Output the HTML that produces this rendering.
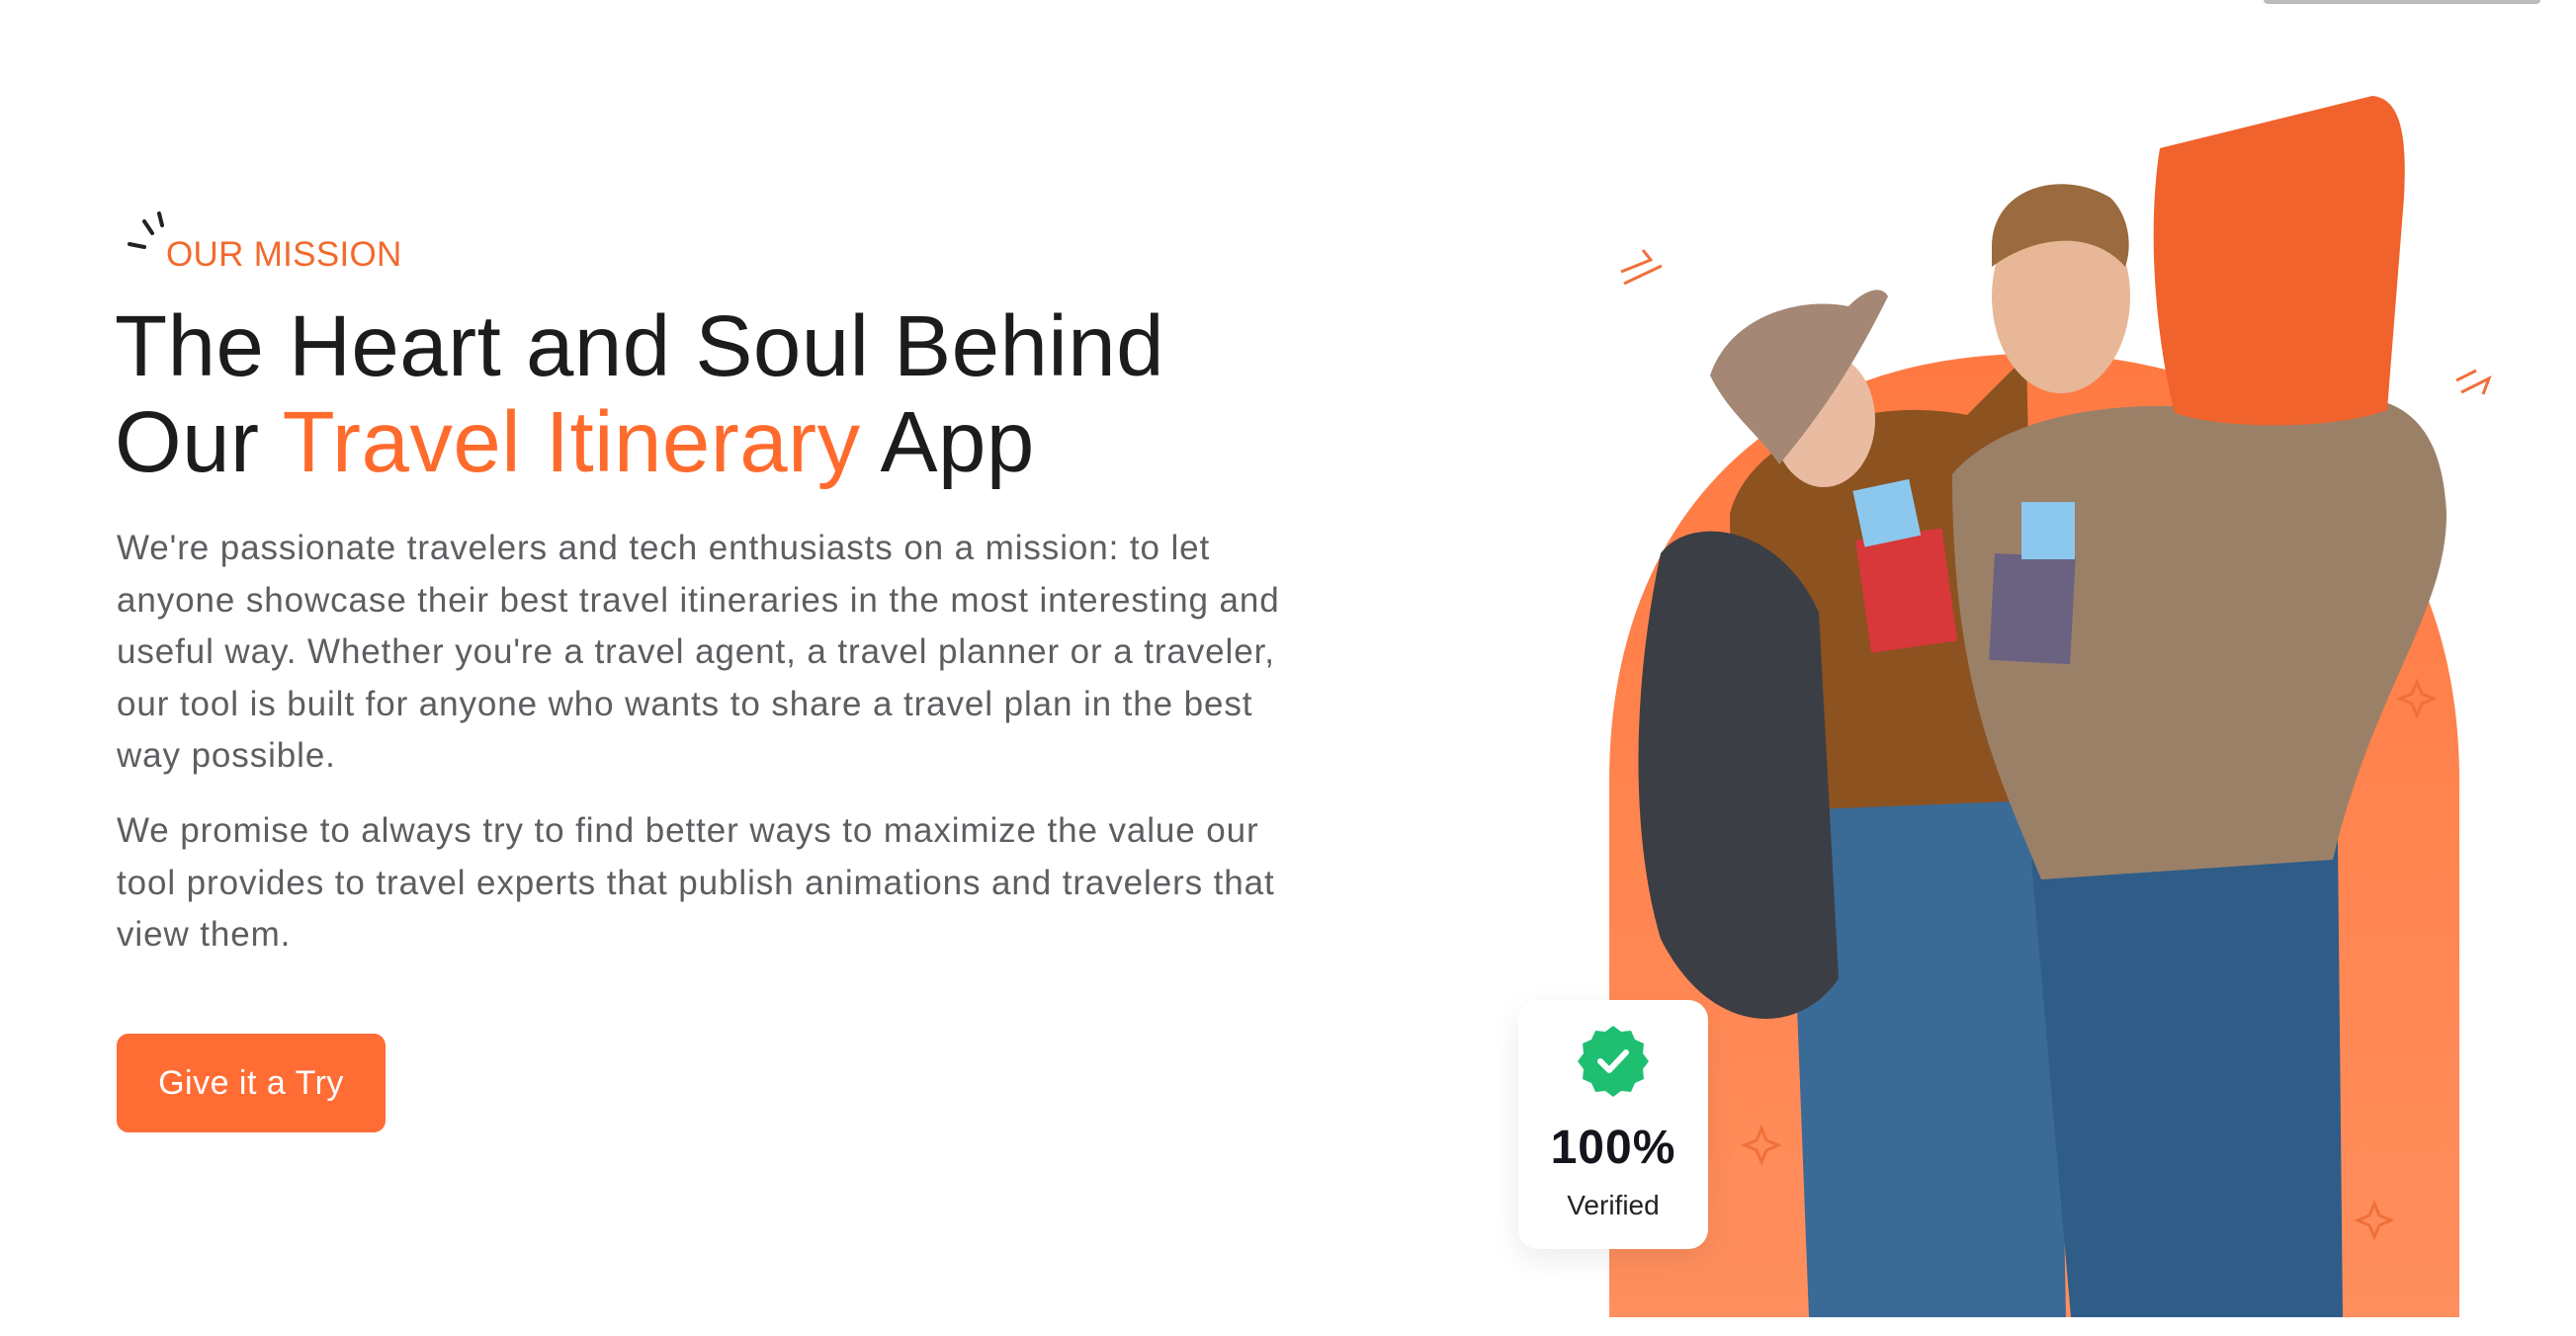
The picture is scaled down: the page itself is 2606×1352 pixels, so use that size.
<!DOCTYPE html>
<html><head><meta charset="utf-8"><style>
html,body{margin:0;padding:0;background:#fff;}
body{width:2606px;height:1352px;position:relative;overflow:hidden;font-family:"Liberation Sans",sans-serif;}
.abs{position:absolute;}
.tag{left:168px;top:238px;font-size:35px;color:#F26A2E;letter-spacing:0.3px;}
h1{position:absolute;left:116px;top:302px;margin:0;font-weight:400;font-size:87px;line-height:97px;color:#1c1c1c;letter-spacing:0.5px;}
h1 span{color:#FF6B2C;}
.p{left:118px;white-space:nowrap;font-size:35px;line-height:52.6px;color:#5d5d62;letter-spacing:0.9px;}
.btn{left:118px;top:1046px;width:272px;height:100px;border-radius:12px;background:#FF6D35;color:#fff;font-size:34px;line-height:100px;text-align:center;letter-spacing:0.5px;}
.card{left:1536px;top:1012px;width:192px;height:252px;background:#fff;border-radius:20px;box-shadow:0 10px 30px rgba(0,0,0,0.08);text-align:center;}
</style></head><body>
<svg class="abs" style="left:126px;top:210px" width="50" height="50" viewBox="0 0 50 50"><g stroke="#222" stroke-width="4" stroke-linecap="round"><line x1="35" y1="6" x2="38" y2="18"/><line x1="20" y1="14" x2="28" y2="26"/><line x1="5" y1="37" x2="20" y2="40"/></g></svg>
<div class="abs tag">OUR MISSION</div>
<h1>The Heart and Soul Behind<br>Our <span>Travel Itinerary</span> App</h1>
<div class="abs p" style="top:529px">We're passionate travelers and tech enthusiasts on a mission: to let<br>anyone showcase their best travel itineraries in the most interesting and<br>useful way. Whether you're a travel agent, a travel planner or a traveler,<br>our tool is built for anyone who wants to share a travel plan in the best<br>way possible.</div>
<div class="abs p" style="top:815px">We promise to always try to find better ways to maximize the value our<br>tool provides to travel experts that publish animations and travelers that<br>view them.</div>
<div class="abs btn">Give it a Try</div>
<div class="abs" style="left:2290px;top:0;width:280px;height:4px;background:#bbb;border-radius:0 0 4px 4px"></div>

<svg class="abs" style="left:0;top:0" width="2606" height="1352" viewBox="0 0 2606 1352">
<defs><linearGradient id="g" x1="0" y1="0" x2="0" y2="1"><stop offset="0" stop-color="#FF7A42"/><stop offset="1" stop-color="#FF8F5E"/></linearGradient></defs>
<path d="M1628 1333 V790 C1628 520 1800 358 2058 358 C2316 358 2488 520 2488 790 V1333 Z" fill="url(#g)"/>
<g stroke="#F0703A" stroke-width="3" fill="none">
<path d="M1640 275 l30 -12 l-8 -10 M1643 287 l38 -18"/>
<path d="M2485 385 l20 -10 M2490 397 l28 -14 l-6 16"/>
<path d="M1695 598 l5 12 12 5 -12 5 -5 12 -5 -12 -12 -5 12 -5z"/>
<path d="M2445 690 l5 12 12 5 -12 5 -5 12 -5 -12 -12 -5 12 -5z"/>
<path d="M1782 1142 l5 12 12 5 -12 5 -5 12 -5 -12 -12 -5 12 -5z"/>
<path d="M2402 1218 l5 12 12 5 -12 5 -5 12 -5 -12 -12 -5 12 -5z"/>
</g>
<path d="M1810 810 L2080 810 L2090 1333 L1830 1333 Z" fill="#3A6A96"/>
<path d="M1750 520 C1770 440 1890 400 1990 420 L2050 360 L2060 810 L1810 820 C1770 750 1750 620 1750 520Z" fill="#8C5220"/>
<path d="M1680 560 C1710 520 1800 530 1840 620 L1860 990 C1820 1050 1730 1050 1680 950 C1650 850 1650 700 1680 560Z" fill="#3B3E44"/>
<ellipse cx="1845" cy="425" rx="52" ry="68" fill="#E9BBA0"/>
<path d="M1730 380 C1750 320 1820 300 1870 310 C1890 290 1905 290 1910 300 C1880 360 1850 410 1800 470 C1780 440 1750 420 1730 380Z" fill="#A48775"/>
<path d="M2055 870 L2365 850 L2370 1333 L2095 1333 Z" fill="#2F5D88"/>
<path d="M1975 480 C2035 410 2180 400 2280 420 C2400 380 2470 400 2475 520 C2475 620 2400 700 2360 870 L2065 890 C2025 790 1975 700 1975 480Z" fill="#9B8068"/>
<ellipse cx="2085" cy="300" rx="70" ry="98" fill="#E7B797"/>
<path d="M2015 250 C2015 190 2085 170 2135 200 C2155 220 2157 250 2150 270 C2115 230 2055 240 2015 270Z" fill="#9A6B3E"/>
<path d="M2185 150 L2400 97 C2430 100 2435 140 2432 200 L2415 415 C2360 435 2250 435 2200 418 C2180 340 2172 230 2185 150Z" fill="#F0632C"/>
<rect x="1885" y="540" width="88" height="115" fill="#D8383A" transform="rotate(-8 1930 600)"/>
<rect x="2015" y="562" width="82" height="108" fill="#6A6280" transform="rotate(3 2056 616)"/>
<rect x="1880" y="490" width="58" height="58" fill="#8CC8EE" transform="rotate(-12 1910 520)"/>
<rect x="2045" y="508" width="54" height="58" fill="#8CC8EE"/>
</svg>

<div class="abs card">
<svg style="position:absolute;left:59px;top:24px" width="74" height="74" viewBox="0 0 74 74"><path d="M37 2 l8 6 10-1 4 9 9 4-1 10 6 8-6 8 1 10-9 4-4 9-10-1-8 6-8-6-10 1-4-9-9-4 1-10-6-8 6-8-1-10 9-4 4-9 10 1z" fill="#1FBF72"/><path d="M24 38 l9 9 17-18" stroke="#fff" stroke-width="6" fill="none" stroke-linecap="round" stroke-linejoin="round"/></svg>
<div style="position:absolute;left:0;right:0;top:122px;font-size:48px;font-weight:700;color:#14141c;letter-spacing:1px">100%</div>
<div style="position:absolute;left:0;right:0;top:192px;font-size:28px;color:#222">Verified</div>
</div>
</body></html>
